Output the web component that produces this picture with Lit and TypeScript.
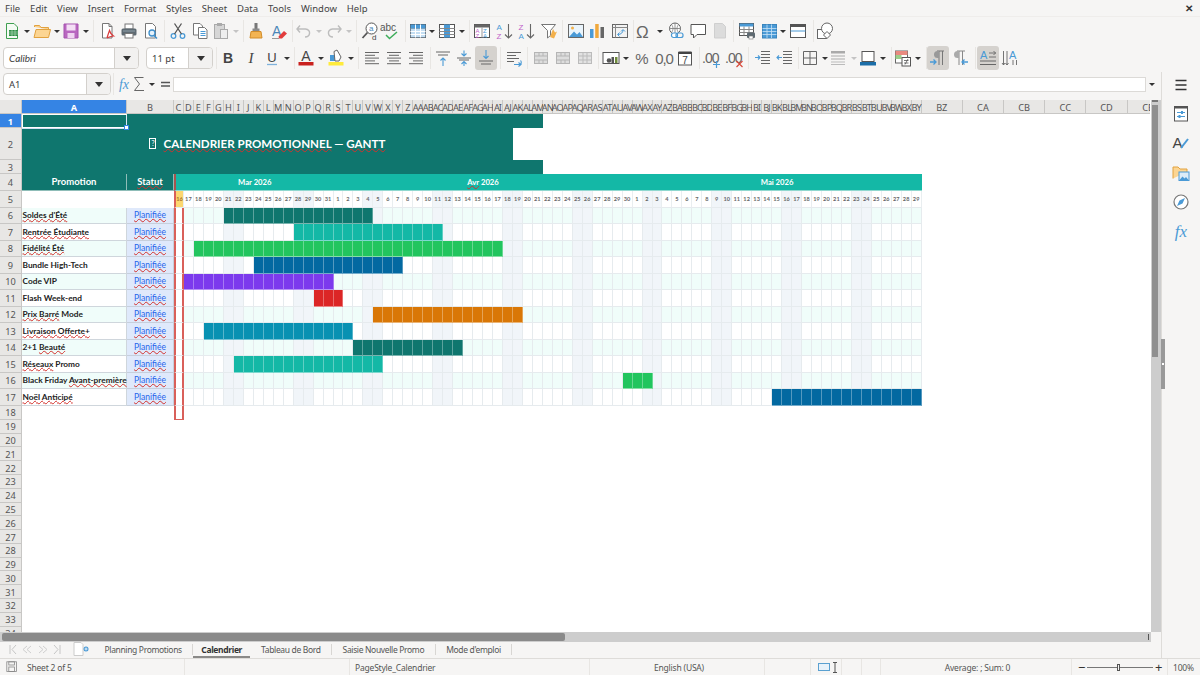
import { LitElement, html, css, svg } from "lit";
import { customElement } from "lit/decorators.js";

const G = "#6d6d6d";
const B = "#4a9ad6";
const LG = "#bdbdbd";
const line = (d: string, c = G, w = 1) => svg`<path d=${d} fill="none" stroke=${c} stroke-width=${w}/>`;
const tbl = (hl: string) => svg`<rect x="2.5" y="3.5" width="15" height="13" fill="#fff" stroke="#555"/>${line("M2.5 7.5h15M2.5 10.5h15M2.5 13.5h15M7.5 3.5v13M12.5 3.5v13", "#777")}${hl === "r" ? svg`<rect x="2.5" y="3.5" width="15" height="4" fill="#4a9ad6"/><rect x="2.5" y="7.5" width="15" height="9" fill="#a9d0ee" opacity=".7"/>${line("M2.5 10.5h15M2.5 13.5h15M7.5 3.5v13M12.5 3.5v13", "#fff")}` : svg`<rect x="7" y="3.5" width="6" height="13" fill="#4a9ad6"/>${line("M2.5 7.5h15M2.5 10.5h15M2.5 13.5h15", "#888")}`}`;
const lines3 = (kind: string) => {
  const rows = [[3, 17], [3, 13], [3, 17], [3, 13], [3, 17]];
  return rows.map((r, i) => {
    const w = r[1] - r[0];
    const x = kind === "l" ? 3 : kind === "r" ? 17 - w : 10 - w / 2;
    return line(`M${x} ${4.5 + i * 2.8}h${w}`, "#666");
  });
};
const merge = (c: string) => svg`<rect x="3.5" y="4.5" width="13" height="11" fill="#ddd" stroke=${c}/>${line("M3.5 8h13M3.5 12h13M8 4.5v3.5M12 4.5v3.5M8 12v3.5M12 12v3.5", c)}`;

const ICONS: Record<string, unknown> = {
  new: svg`<path d="M4.5 2.5h7.5l3.5 3.5v11.5h-11z" fill="#f4fbf4" stroke="#3f9f50"/><rect x="7" y="9" width="9" height="6" fill="#2f8d46"/>${line("M7 11h9M7 13h9M10 9v6M13 9v6", "#bfe3c6", .6)}`,
  open: svg`<path d="M2.5 6V4.5h5l1.5 2h7.5v2" fill="#f9d08c" stroke="#e2a23f"/><path d="M2 16.5 4 8.5h14.5l-2 8z" fill="#fcd592" stroke="#e2a23f"/>`,
  save: svg`<path d="M3 3h14v14H3z" fill="#b967c0" stroke="#a552ae"/><rect x="5.5" y="3.5" width="9" height="6" fill="#f4dff5"/><rect x="6.5" y="12" width="7" height="5" fill="#f0d4f1"/>`,
  pdf: svg`<path d="M5.5 2.5h6.5l3 3v11.5h-9.5z" fill="#fff" stroke="#777"/>${line("M12 2.5v3h3", "#777")}${line("M10 17c1-3.5 2-6 2.5-7.5.6 2.3 2 4.3 4 5.5-2.3.2-4.5.8-6.5 2", "#d83b3b", 1.2)}`,
  print: svg`<rect x="6" y="3" width="8" height="5" fill="#fff" stroke="#777"/><rect x="2.5" y="7.5" width="15" height="7" rx="1.5" fill="#5e6a72"/><rect x="6" y="12.5" width="8" height="4.5" fill="#fff" stroke="#777"/>${line("M4 10h12", "#8fa0aa")}`,
  preview: svg`<path d="M4.5 2.5h7l3 3v11.5h-10z" fill="#fff" stroke="#777"/><circle cx="11" cy="12" r="3" fill="#e6f2fb" stroke="#3f8fcb" stroke-width="1.3"/>${line("M13 14.5l3 3", "#3f8fcb", 1.5)}`,
  cut: svg`<circle cx="5.5" cy="15" r="2.3" fill="none" stroke=${B} stroke-width="1.3"/><circle cx="14.5" cy="15" r="2.3" fill="none" stroke=${B} stroke-width="1.3"/>${line("M6.5 13 13.5 2.5M13.5 13 6.5 2.5", "#555", 1.3)}`,
  copy: svg`<path d="M3.5 2.5h6.5l2.5 2.5v9h-9z" fill="#fff" stroke="#777"/><path d="M8.5 6.5h6l2.5 2.5v8.5h-8.5z" fill="#fff" stroke="#777"/>${line("M10.5 10.5h5M10.5 12.5h5M10.5 14.5h5", B)}`,
  paste: svg`<rect x="3.5" y="3.5" width="10" height="14" fill="#d6d6d6" stroke="#aaa"/><rect x="6" y="2" width="5" height="3" fill="#aaa"/><rect x="9.5" y="8.5" width="7" height="9" fill="#eee" stroke="#aaa"/>`,
  clone: svg`<rect x="8.5" y="2" width="3" height="6" fill="#777"/><rect x="6.5" y="7.5" width="7" height="2.5" fill="#8a8a8a"/><path d="M5 10.5h10l1 6.5H4z" fill="#f3b453" stroke="#d28d2a"/>`,
  clear: svg`<text x="3" y="14.5" font-family="Liberation Sans" font-size="14" fill="#4a86b8">A</text><path d="M9.5 15.5 15 10l3 2.5-5 5H10z" fill="#e23d3d"/>${line("M3 17.5h7", "#999")}`,
  undo: svg`${line("M6 11.5 3 8l3-3.5M3.5 8h8c6 .5 5 8 -.5 8", LG, 1.4)}`,
  redo: svg`${line("M14 11.5 17 8l-3-3.5M16.5 8h-8c-6 .5-5 8 .5 8", LG, 1.4)}`,
  find: svg`<circle cx="11.5" cy="7.5" r="5.5" fill="#fff" stroke="#555"/>${line("M7.5 11.5 2.5 17", "#555", 1.8)}<text x="9" y="10" font-family="Liberation Sans" font-size="8" fill="#4a86b8">a</text><text x="12" y="19" font-family="Liberation Sans" font-size="8" fill="#444">d</text>`,
  spell: svg`<text x="0" y="10" font-family="Liberation Sans" font-size="10" fill="#555">abc</text>${line("M6 14l3.5 3.5L17 11", "#3fae5b", 1.5)}`,
  rows: tbl("r"),
  cols: tbl("c"),
  sort: svg`<rect x="2.5" y="3.5" width="15" height="13" fill="#fff" stroke="#555"/><rect x="2.5" y="3.5" width="15" height="3" fill="#666"/>${line("M10 6.5v10", "#999")}<text x="3.5" y="12" font-family="Liberation Sans" font-size="6" fill="#c05fc9">A</text><text x="3.5" y="16.5" font-family="Liberation Sans" font-size="6" fill="#c05fc9">Z</text><text x="11" y="12" font-family="Liberation Sans" font-size="6" fill=${B}>Z</text><text x="11" y="16.5" font-family="Liberation Sans" font-size="6" fill=${B}>A</text>`,
  asc: svg`<text x="1.5" y="9" font-family="Liberation Sans" font-size="8" fill=${B}>A</text><text x="1.5" y="17.5" font-family="Liberation Sans" font-size="8" fill="#c05fc9">Z</text>${line("M13.5 3v14M10 13.5l3.5 3.5 3.5-3.5", "#666", 1.1)}`,
  desc: svg`<text x="1.5" y="9" font-family="Liberation Sans" font-size="8" fill="#c05fc9">Z</text><text x="1.5" y="17.5" font-family="Liberation Sans" font-size="8" fill=${B}>A</text>${line("M13.5 3v14M10 13.5l3.5 3.5 3.5-3.5", "#666", 1.1)}`,
  filter: svg`<path d="M2.5 3.5h14l-5 6v5l-3 2.5v-7.5z" fill="#fff" stroke="#777"/><path d="M11 16l3-8 2 3.5 2-1-3 7z" fill="#f3b04a"/>`,
  image: svg`<rect x="2.5" y="3.5" width="15" height="13" fill="#eaf4fb" stroke="#666"/><circle cx="6.5" cy="7" r="1.5" fill="#f3b04a"/><path d="M3 16l5-5.5 3 3 2.5-2.5 3.5 5z" fill=${B}/>`,
  chart: svg`<rect x="3" y="8" width="3.5" height="9" fill=${B}/><rect x="8.2" y="3" width="3.5" height="14" fill="#f0a83c"/><rect x="13.5" y="6" width="3.5" height="11" fill="#666"/>`,
  pivot: svg`<rect x="2.5" y="3.5" width="15" height="13" fill="#f3f3f3" stroke="#666"/>${line("M2.5 6.5h15M5.5 3.5v13", "#888")}${line("M8 13.5c3 0 5-2 5-4.5M11 10.5l2-2 2 2M9.5 11.5l-2 2 2 2", B)}`,
  omega: svg`<text x="1" y="16.5" font-family="Liberation Sans" font-size="17" fill="#666">Ω</text>`,
  link: svg`<circle cx="9" cy="7.5" r="5.5" fill="#fff" stroke="#666"/>${line("M3.5 7.5h11M9 2v11M5.5 3.5c2 3 2 5 0 8M12.5 3.5c-2 3-2 5 0 8", "#777", .8)}<rect x="5.5" y="12" width="6" height="4.5" rx="2" fill="#fff" stroke=${B} stroke-width="1.2"/><rect x="10" y="12" width="7" height="4.5" rx="2" fill="none" stroke=${B} stroke-width="1.2"/>`,
  comment: svg`<path d="M3 3.5h14.5v10H9l-3.5 3.5v-3.5H3z" fill="#fff" stroke="#555"/>`,
  note: svg`<path d="M4.5 2.5h8l3 3v11.5h-11z" fill="#dcdcdc" stroke="#cfcfcf"/>`,
  tprint: svg`<rect x="2.5" y="2.5" width="14" height="12" fill="#fff" stroke="#555"/><rect x="2.5" y="2.5" width="14" height="3" fill=${B}/>${line("M2.5 8.5h14M2.5 11.5h14M7 5.5v9M12 5.5v9", "#888")}<rect x="10" y="11.5" width="8" height="5.5" rx="1" fill="#5e6a72"/><rect x="12" y="15" width="4" height="3" fill="#fff" stroke="#777" stroke-width=".6"/>`,
  tblue: svg`<rect x="3.5" y="3.5" width="14" height="13.5" fill="#4a9ad6" stroke="#3a85bd"/>${line("M3.5 7.5h14M3.5 10.5h14M3.5 13.5h14M8 3.5v13.5M12.5 3.5v13.5", "#c8e2f5", .8)}`,
  split: svg`<rect x="2.5" y="3.5" width="15" height="13" fill="#fff" stroke="#555"/><rect x="2.5" y="3.5" width="15" height="2.5" fill="#555"/>${line("M2.5 10h15", B)}`,
  shapes: svg`<rect x="2.5" y="8.5" width="9" height="9" fill="#fff" stroke="#666"/><circle cx="12" cy="7.5" r="5.5" fill="#fff" stroke="#666"/><path d="M12 10.5l3.5 3.5-3.5 3.5-3.5-3.5z" fill="#fff" stroke="#666"/>`,
  bold: svg`<text x="10" y="15" text-anchor="middle" font-family="Liberation Sans" font-weight="700" font-size="14" fill="#444">B</text>`,
  italic: svg`<text x="10" y="15" text-anchor="middle" font-family="Liberation Serif" font-style="italic" font-size="15" fill="#444">I</text>`,
  under: svg`<text x="10" y="13.5" text-anchor="middle" font-family="Liberation Sans" font-size="13" fill="#444">U</text>${line("M5 16.5h10", "#7fb2dc", 1.3)}`,
  color: svg`<text x="10" y="13" text-anchor="middle" font-family="Liberation Sans" font-size="14" fill="#444">A</text><rect x="2.5" y="14" width="15" height="3.5" fill="#c9211e"/>`,
  bg: svg`<path d="M4 7h5v6H4z" fill=${B}/><path d="M8 3.5 11 2l4 7-2 4H9z" fill="#fff" stroke="#666"/><rect x="2.5" y="14" width="15" height="3.5" fill="#ffeb3b"/>`,
  left: svg`${lines3("l")}`,
  center: svg`${lines3("c")}`,
  right: svg`${lines3("r")}`,
  top: svg`${line("M3 4h14M5 7h10", "#666")}${line("M10 18v-8M7.5 12.5 10 10l2.5 2.5", B, 1.1)}`,
  vmid: svg`${line("M3 10h14M5 12h10", "#666")}${line("M10 2.5v5.5M7.5 5.5 10 8l2.5-2.5M10 18v-4M7.5 16 10 13.5l2.5 2.5", B, 1.1)}`,
  bottom: svg`${line("M3 13h14M5 16h10", "#666")}${line("M10 2v8.5M7.5 8 10 10.5 12.5 8", B, 1.1)}`,
  wrap: svg`${line("M3 4.5h14M3 7.5h9M3 10.5h12M3 13.5h7", "#666")}${line("M10 16.5h6.5c1-.5 1-3.5 0-4M14.5 14.5l2.5 2-2.5 2", B, 1.1)}`,
  m1: merge("#b5b5b5"),
  m2: merge("#b5b5b5"),
  m3: svg`<rect x="3.5" y="4.5" width="13" height="11" fill="#e2e2e2" stroke="#bbb"/>${line("M3.5 8h13M3.5 12h13M8 4.5v11M12 4.5v11", "#bbb")}`,
  cur: svg`<rect x="2" y="4.5" width="16" height="11" fill="#fff" stroke="#555"/><circle cx="8" cy="12.5" r="2.3" fill="#555"/><rect x="10.5" y="9" width="2.5" height="6" fill="#555"/><rect x="14" y="9" width="2.5" height="6" fill="#6e8a3a"/>`,
  pct: svg`<text x="10" y="15.5" text-anchor="middle" font-family="Liberation Sans" font-size="15" fill="#666">%</text>`,
  num: svg`<text x="10" y="15.5" text-anchor="middle" font-family="Liberation Sans" font-size="15" letter-spacing="-1.2" fill="#666">0,0</text>`,
  date: svg`<rect x="3.5" y="4.5" width="13" height="12.5" fill="#fff" stroke="#555"/><rect x="3.5" y="3.5" width="13" height="2.5" fill="#444"/><text x="10" y="15.5" text-anchor="middle" font-family="Liberation Sans" font-size="10" fill="#444">7</text>`,
  addd: svg`<text x="0" y="14.5" font-family="Liberation Sans" font-size="14" letter-spacing="-1" fill="#666">.00</text>${line("M11 16.5h7M14.5 13v7", B, 1.2)}`,
  deld: svg`<text x="0" y="14.5" font-family="Liberation Sans" font-size="14" letter-spacing="-1" fill="#666">.00</text>${line("M11.5 13l6 6M17.5 13l-6 6", "#d84a3a", 1.2)}`,
  indent: svg`${line("M8 3.5h9M8 6.5h9M8 9.5h9M8 12.5h9M8 15.5h9", "#666")}${line("M2 9.5h5M5 7.5l2 2-2 2", B, 1.1)}`,
  outdent: svg`${line("M8 3.5h9M8 6.5h9M8 9.5h9M8 12.5h9M8 15.5h9", "#666")}${line("M7 9.5H2M4 7.5l-2 2 2 2", B, 1.1)}`,
  border: svg`${line("M3.5 3.5h13v13h-13zM10 3.5v13M3.5 10h13", "#666")}`,
  lstyle: svg`<rect x="3" y="3" width="14" height="2.5" fill="#aaa"/>${line("M3 8h14M3 11h14", "#aaa")}${line("M3 14h14M3 16.5h14", "#bbb", 1)}`,
  bcolor: svg`<rect x="4" y="3.5" width="12" height="10" fill="#fff" stroke="#555"/><rect x="2" y="14" width="16" height="3.5" fill="#1c6ea8"/>`,
  cond: svg`<rect x="2.5" y="3" width="12" height="12" fill="#fff" stroke="#666"/><rect x="2.5" y="3" width="12" height="4" fill="#e88a80"/><rect x="2.5" y="7" width="6" height="4" fill="#9ccf8a"/><rect x="9" y="9.5" width="8.5" height="8.5" fill="#fff" stroke="#555"/>${line("M11 12.5h4.5M11 15h4.5M15 11l-3 5.5", "#555", .8)}`,
  ltr: svg`${line("M11 3v14M14.5 3v14M9 3h7", "#777")}<path d="M11 3H9.5a3.5 3.5 0 0 0 0 7H11z" fill="#999"/>${line("M2 14h6M5.5 11.5 8 14l-2.5 2.5", B, 1.3)}`,
  rtl: svg`${line("M9 3v14M12.5 3v14M7 3h8", "#888")}<path d="M9 3H7.5a3.5 3.5 0 0 0 0 7H9z" fill="#aaa"/>${line("M12 14h6M14.5 11.5 12 14l2.5 2.5", B, 1.3)}`,
  horiz: svg`<text x="2" y="10.5" font-family="Liberation Sans" font-size="11" fill=${B}>A</text>${line("M2 13h16M2 16.5h16", "#666")}${line("M11 5h7M11 9h7M15.5 3l2 2-2 2", "#666", .9)}`,
  vert: svg`<text x="9" y="10.5" font-family="Liberation Sans" font-size="11" fill=${B}>A</text>${line("M3.5 3v14M7 3v14M2 15l1.5 2 1.5-2M5.5 15 7 17l1.5-2M13 12v5M16.5 12v5", "#666", .9)}`,
  fx: svg`<text x="10" y="14.5" text-anchor="middle" font-family="Liberation Serif" font-style="italic" font-size="14" fill=${B}>fx</text>`,
  sum: svg`<path d="M5.5 3.5h9M5.5 3.5 10.5 10l-5 6.5h9.500" fill="none" stroke="#666" stroke-width="1"/>`,
  eq: svg`${line("M6 8.5h9M6 12h9", "#555", 1.4)}`,
  menu: svg`${line("M4.5 5.5h11M4.5 10h11M4.5 14.5h11", "#333", 1.4)}`,
  sprops: svg`<rect x="3.5" y="2.5" width="13" height="14.5" fill="#fff" stroke="#555"/><rect x="3.5" y="2.5" width="13" height="2" fill="#555"/>${line("M6 8.5h8M6 12.5h8", B, 1.2)}<rect x="10" y="7" width="2" height="3" fill=${B}/><rect x="7.5" y="11" width="2" height="3" fill=${B}/>`,
  sstyle: svg`<text x="1.5" y="15" font-family="Liberation Sans" font-size="15" fill="#444">A</text>${line("M10 15 17 6", B, 2)}`,
  sgal: svg`<path d="M2 15.5V4h5l2 2h7v3" fill="#fcd592" stroke="#e2a23f"/><rect x="8" y="9" width="10" height="8.5" fill="#dcecf8" stroke=${B}/><path d="M8.5 17l3-3.5 2 2 1.5-1.5 2.5 3z" fill=${B}/>`,
  snav: svg`<circle cx="10" cy="10" r="7" fill="#fff" stroke="#777" stroke-width="1.2"/><path d="M14 6l-2.5 5.5L6 14l2.5-5.5z" fill=${B}/>`,
  sfx: svg`<text x="10" y="15.5" text-anchor="middle" font-family="Liberation Serif" font-style="italic" font-size="17" fill=${B}>fx</text>`,
  ssave: svg`<rect x="3.5" y="3.5" width="12" height="12" fill="none" stroke="#888"/><rect x="6" y="3.5" width="7" height="4" fill="none" stroke="#888"/><rect x="6" y="10" width="7" height="5.5" fill="none" stroke="#888"/>`,
};

type Item = [number, string, string?];
const SEP = "sep", DD = "dd";
const TB1: Item[] = [[12,"new"],[27,DD],[42,"open"],[57,DD],[71,"save"],[86,DD],[93,SEP],[107,"pdf"],[129,"print"],[151,"preview"],[164,SEP],[178,"cut"],[200,"copy"],[221,"paste"],[236,"ddoff"],[243,SEP],[256,"clone"],[279,"clear"],[292,SEP],[304,"undo"],[319,"ddoff"],[334,"redo"],[349,"ddoff"],[356,SEP],[370,"find"],[390,"spell"],[405,SEP],[418,"rows"],[432,DD],[447,"cols"],[462,DD],[469,SEP],[482,"sort"],[505,"asc"],[527,"desc"],[549,"filter"],[562,SEP],[576,"image"],[597,"chart"],[620,"pivot"],[633,SEP],[645,"omega"],[660,DD],[676,"link"],[698,"comment"],[720,"note"],[733,SEP],[747,"tprint"],[769,"tblue"],[783,DD],[798,"split"],[813,SEP],[825,"shapes"]];
const TB2: Item[] = [[216,SEP],[228,"bold"],[251,"italic"],[272,"under"],[287,DD],[294,SEP],[306,"color"],[321,DD],[336,"bg"],[351,DD],[358,SEP],[372,"left"],[394,"center"],[416,"right"],[430,SEP],[443,"top"],[464,"vmid"],[486,"bottom","on"],[500,SEP],[514,"wrap"],[527,SEP],[541,"m1"],[563,"m2"],[585,"m3"],[598,SEP],[611,"cur"],[626,DD],[642,"pct"],[664,"num"],[685,"date"],[699,SEP],[712,"addd"],[735,"deld"],[748,SEP],[763,"indent"],[785,"outdent"],[798,SEP],[810,"border"],[825,DD],[838,"lstyle"],[854,"ddoff"],[868,"bcolor"],[883,DD],[891,SEP],[903,"cond"],[918,DD],[926,SEP],[938,"ltr","on"],[960,"rtl"],[975,SEP],[988,"horiz","on"],[1010,"vert"]];

const ico = (n: string) => html`<svg class="i" viewBox="0 0 20 20">${ICONS[n]}</svg>`;
function items(list: Item[], start: number) {
  let cur = start;
  return list.map(([x, n, cls]) => {
    const w = n === SEP ? 1 : n === DD || n === "ddoff" ? 8 : 22;
    const ml = x - w / 2 - cur;
    cur = x + w / 2;
    const st = `margin-left:${ml}px`;
    if (n === SEP) return html`<span class="sep" style=${st}></span>`;
    if (n === DD || n === "ddoff") return html`<span class="dd ${n === "ddoff" ? "off" : ""}" style=${st}></span>`;
    return html`<span class="btn ${cls ?? ""}" style=${st}>${ico(n)}</span>`;
  });
}

const colName = (n: number) => {
  let s = "";
  while (n > 0) { const r = (n - 1) % 26; s = String.fromCharCode(65 + r) + s; n = Math.floor((n - 1) / 26); }
  return s;
};
const DARK = "#0f766e", LIGHT = "#14b8a6", GREEN = "#22c55e", BLUE = "#0369a1", PURP = "#7c3aed", RED = "#dc2626", ORG = "#d97706", CYAN = "#0891b2";
type Row = [unknown, number, number, string];
const wz = (t: string) => html`<span class="w">${t}</span>`;
const ROWS: Row[] = [
  [wz("Soldes d'Été"), 5, 19, DARK],
  [wz("Rentrée Étudiante"), 12, 26, LIGHT],
  [wz("Fidélité Été"), 2, 32, GREEN],
  ["Bundle High-Tech", 8, 22, BLUE],
  ["Code VIP", 1, 15, PURP],
  ["Flash Week-end", 14, 16, RED],
  [html`${wz("Prix Barré")} Mode`, 20, 34, ORG],
  [wz("Livraison Offerte+"), 3, 17, CYAN],
  [html`2+1 ${wz("Beauté")}`, 18, 28, DARK],
  [html`${wz("Réseaux")} Promo`, 6, 20, LIGHT],
  [html`Black Friday ${wz("Avant-première")}`, 45, 47, GREEN],
  [wz("Noël Anticipé"), 60, 74, BLUE],
];
const isWe = (i: number) => ((i - 5) % 7 + 7) % 7 < 2;
const dayNum = (i: number) => (i < 16 ? 16 + i : i < 46 ? i - 15 : i - 45);
const area = (r: number, c: number, r2 = r + 1, c2 = c + 1) => `grid-area:${r}/${c}/${r2}/${c2}`;

function gridCells() {
  const out: unknown[] = [];
  out.push(html`<div class="h corner" style=${area(1, 1)}></div>`);
  out.push(html`<div class="h sel" style=${area(1, 2)}>A</div>`);
  out.push(html`<div class="h" style=${area(1, 3)}>B</div>`);
  for (let i = 0; i < 81; i++) out.push(html`<div class="h ${i >= 24 && i < 75 ? "tight" : ""}" style=${area(1, 4 + i)}>${colName(3 + i)}</div>`);
  for (let r = 1; r <= 34; r++) out.push(html`<div class="h rh ${r === 1 ? "sel" : ""}" style=${area(r + 1, 1)}>${r}</div>`);
  out.push(html`<div class="title" style=${area(2, 2, 5, 38)}><span class="tofu">?</span><span>${wz("CALENDRIER PROMOTIONNEL")} — ${wz("GANTT")}</span></div>`);
  out.push(html`<div class="dk" style=${area(2, 38, 3, 41)}></div>`);
  out.push(html`<div class="dk" style=${area(4, 38, 5, 41)}></div>`);
  out.push(html`<div class="cursor" style=${area(2, 2)}><span class="handle"></span></div>`);
  out.push(html`<div class="hd" style=${area(5, 2)}>Promotion</div>`);
  out.push(html`<div class="hd" style=${area(5, 3)}>${wz("Statut")}</div>`);
  out.push(html`<div class="mo first" style=${area(5, 4, 6, 20)}>Mar 2026</div>`);
  out.push(html`<div class="mo" style=${area(5, 20, 6, 50)}><span>${wz("Avr")} 2026</span></div>`);
  out.push(html`<div class="mo" style=${area(5, 50, 6, 79)}>Mai 2026</div>`);
  for (let i = 0; i < 75; i++) {
    out.push(html`<div class="dn ${i === 0 ? "today" : isWe(i) ? "we" : ""}" style=${area(6, 4 + i)}>${dayNum(i)}</div>`);
  }
  ROWS.forEach(([label, a, b, col], k) => {
    const r = 7 + k;
    const alt = k % 2 === 0;
    out.push(html`<div class="nm ${alt ? "alt" : ""}" style=${area(r, 2)}><span>${label}</span></div>`);
    out.push(html`<div class="st" style=${area(r, 3)}>${wz("Planifiée")}</div>`);
    for (let i = 0; i < 75; i++) {
      if (i >= a && i <= b) {
        out.push(html`<div class="d bar" style="${area(r, 4 + i)};background:${col}"></div>`);
      } else {
        const cls = i === 0 ? "tc" : isWe(i) ? "we" : alt ? "alt" : "";
        out.push(html`<div class="d ${cls}" style=${area(r, 4 + i)}></div>`);
      }
    }
  });
  out.push(html`<div class="tc end" style=${area(19, 4)}></div>`);
  return out;
}

@customElement("app-root")
export class AppRoot extends LitElement {
  static styles = css`
    :host { display: block; width: 1200px; height: 675px; overflow: hidden; background: #f6f5f4; font-family: "Noto Sans", sans-serif; color: #3d3d3d; }
    .app { display: flex; flex-direction: column; width: 1200px; height: 675px; }
    .menubar { display: flex; align-items: center; justify-content: space-between; height: 17px; padding: 0 7px 0 5px; font-size: 9.5px; border-bottom: 1px solid #efedeb; flex: none; box-sizing: border-box; color: #444; }
    .menus { display: flex; gap: 9.9px; }
    .close { font-size: 10px; font-weight: 700; color: #333; }
    .tb { display: flex; align-items: center; flex: none; }
    .tb1 { height: 27px; }
    .tb2 { height: 28px; }
    .btn { display: flex; align-items: center; justify-content: center; width: 22px; height: 24px; flex: none; border-radius: 3px; }
    .btn.on { background: #d5d2ce; }
    .i { width: 20px; height: 20px; display: block; flex: none; }
    .sep { width: 1px; height: 22px; background: #e8e6e3; flex: none; }
    .dd { width: 8px; height: 0; flex: none; position: relative; }
    .dd::after { content: ""; position: absolute; left: 1px; top: -1px; border: 3px solid transparent; border-top: 3.5px solid #333; border-bottom: 0; }
    .dd.off::after { border-top-color: #c4c4c4; }
    .combo { display: flex; height: 22px; background: #fff; border: 1px solid #d3d0cc; border-radius: 4px; flex: none; font-size: 9.5px; box-sizing: border-box; overflow: hidden; }
    .combo .v { flex: 1; display: flex; align-items: center; padding-left: 5px; }
    .combo .a { width: 23px; background: #f2f1f0; border-left: 1px solid #d3d0cc; display: flex; align-items: center; justify-content: center; }
    .combo .a::after { content: ""; border: 4px solid transparent; border-top: 5px solid #333; border-bottom: 0; }
    .font { width: 136px; margin-left: 3px; font-style: italic; font-family: "Lato", sans-serif; font-size: 10px; }
    .size { width: 67px; margin-left: 7px; }
    .below { flex: 1; display: flex; min-height: 0; }
    .main { width: 1161px; flex: none; display: flex; flex-direction: column; }
    .side { flex: 1; border-left: 1px solid #dedcd9; display: flex; flex-direction: column; align-items: center; padding-top: 3px; gap: 9.2px; position: relative; }
    .grip { position: absolute; left: -1px; top: 267px; width: 4px; height: 50px; background: #999; }
    .grip::after { content: ""; position: absolute; top: 24px; left: 1px; width: 2px; height: 2px; background: #fff; }
    .fbar { display: flex; align-items: center; height: 28px; flex: none; box-sizing: border-box; padding-bottom: 4px; }
    .name { width: 108px; margin-left: 3px; }
    .input { width: 973px; height: 15px; background: #fff; border: 1px solid #dcdad7; box-sizing: border-box; flex: none; margin-left: -3px; }
    .fdd { margin-left: 2px; }
    .view { flex: 1; display: flex; min-height: 0; background: #fff; }
    .sheet { width: 1150px; height: 532px; overflow: hidden; flex: none; display: grid; font-family: "Lato", sans-serif;
      grid-template-columns: 22px 105px 47px repeat(75, 9.973px) repeat(6, 41.2px);
      grid-template-rows: 14px 14px 32px 14px 17px 16.7px repeat(12, 16.5px) 14.2px repeat(16, 13.79px); }
    .h { background: #e8e7e5; border-right: 1px solid #c8c7c5; border-bottom: 1px solid #c8c7c5; box-sizing: border-box; display: flex; align-items: center; justify-content: center; white-space: nowrap; font: 9.2px "Noto Sans", sans-serif; color: #555; padding-top: 1px; }
    .h.tight { letter-spacing: -.9px; }
    .h.sel { background: #3584e4; color: #fff; font-weight: 700; }
    .title { background: #0f766e; color: #fff; font: 700 11.6px "Lato", sans-serif; display: flex; align-items: center; justify-content: center; gap: 7px; white-space: nowrap; padding-bottom: 2px; box-sizing: border-box; }
    .tofu { width: 5px; height: 9px; border: 1px solid #fff; font-size: 7px; line-height: 9px; text-align: center; font-weight: 400; }
    .dk { background: #0f766e; }
    .w { text-decoration: underline wavy #d3312c; text-decoration-thickness: 1px; text-underline-offset: 0; text-decoration-skip-ink: none; }
    .cursor { border: 1px solid #fff; border-right-color: #dbe8f7; box-sizing: border-box; position: relative; box-shadow: 0 1px 0 #cfe0f5; z-index: 2; }
    .handle { position: absolute; right: -3px; bottom: -3px; width: 3px; height: 3px; background: #fff; border: 1px solid #3584e4; }
    .hd { background: #0f766e; color: #fff; font-weight: 700; font-size: 9.5px; display: flex; align-items: center; justify-content: center; border-right: 1px solid #8fbdb8; border-bottom: 1px solid #8fbdb8; box-sizing: border-box; padding-bottom: 1px; }
    .mo { background: #14b8a6; color: #fff; font-weight: 700; font-size: 7.7px; display: flex; align-items: center; justify-content: center; border-bottom: 1px solid #8fd8cf; box-sizing: border-box; }
    .mo.first { border-left: 2px solid #a5544f; }
    .dn { font-size: 5.6px; color: #666; display: flex; align-items: center; justify-content: center; border-right: 1px solid #e9eef0; border-bottom: 1px solid #e6ebee; box-sizing: border-box; background: #fff; font-weight: 700; letter-spacing: .1px; }
    .dn.we { background: #f1f5f9; }
    .dn.today { background: #fcd770; color: #a5702a; border-left: 2px solid #d9605a; }
    .nm { font-size: 8.3px; font-weight: 700; color: #222; white-space: nowrap; display: flex; align-items: center; padding-left: .5px; box-sizing: border-box; background: #fff; border-right: 1px solid #cfd6dc; border-bottom: 1px solid #cfd6dc; }
    .nm.alt { background: #f0fdfa; }
    .st { background: #dfe9fb; color: #2563eb; font-size: 8.5px; display: flex; align-items: center; justify-content: center; border-right: 1px solid #c6cfdc; border-bottom: 1px solid #c6cfdc; box-sizing: border-box; }
    .d { border-right: 1px solid #e6ebee; border-bottom: 1px solid #e6ebee; box-sizing: border-box; background: #fff; }
    .d.alt { background: #f0fdfa; }
    .d.we { background: #f1f5f9; }
    .d.bar { border-right-color: rgba(255,255,255,.32); border-bottom-color: rgba(255,255,255,.45); }
    .tc, .d.tc { border-left: 2px solid #d9605a; border-right: 2px solid #d9605a; background: #fff; box-sizing: border-box; }
    .tc.end { border-bottom: 1px solid #d9605a; }
    .vs { width: 10px; background: #cdcdcd; flex: none; position: relative; margin-left: 1px; }
    .vs::before { content: ""; position: absolute; left: 1px; top: 5px; width: 6px; height: 252px; background: #8f8f8f; }
    .vs::after { content: ""; position: absolute; left: 1px; top: 0; width: 6px; height: 2px; background: #777; }
    .hs { height: 10px; flex: none; width: 1151px; background: #cdcdcd; position: relative; }
    .hs::before { content: ""; position: absolute; left: 2px; top: 1px; width: 563px; height: 8px; background: #8a8a8a; border-radius: 2px; }
    .hs::after { content: ""; position: absolute; left: 1148px; top: 2px; width: 1px; height: 6px; background: #555; }
    .tabs { height: 16px; flex: none; display: flex; align-items: center; font-size: 8.5px; letter-spacing: -.35px; color: #555; box-sizing: border-box; padding-bottom: 2px; }
    .nav { display: flex; align-items: center; width: 66px; padding-left: 7px; box-sizing: border-box; flex: none; }
    .navbtn { width: 14px; height: 11px; flex: none; }
    .docp { flex: none; width: 20px; height: 14px; margin-left: 5px; }
    .tab { padding: 0 10.5px; border-right: 1px solid #d8d6d3; height: 11px; line-height: 11px; position: relative; white-space: nowrap; }
    .tab.first { margin-left: 3px; padding-right: 10px; }
    .tab.act { font-weight: 700; color: #333; border-right-color: transparent; padding: 0 7.5px 0 8.5px; }
    .tab.act::after { content: ""; position: absolute; left: 0; right: 0; bottom: -3px; height: 2px; background: #8b8a88; }
    .status { height: 17px; flex: none; border-top: 1px solid #dedcd9; box-sizing: border-box; display: flex; align-items: center; font-size: 8.5px; letter-spacing: -.2px; color: #555; }
    .s { display: flex; align-items: center; height: 100%; box-sizing: border-box; border-right: 1px solid #e8e6e3; flex: none; white-space: nowrap; }
    .s1 { width: 185px; padding-left: 2px; gap: 5px; }
    .s2 { width: 165px; }
    .s3 { width: 240px; padding-left: 5px; }
    .s4 { width: 175px; justify-content: center; padding-left: 4px; }
    .s5 { width: 46px; }
    .s6 { width: 31px; padding-left: 7px; gap: 3px; }
    .s7 { width: 20px; }
    .s8 { width: 19px; }
    .s9 { width: 191px; justify-content: center; padding-left: 3px; }
    .s10 { width: 96px; padding-left: 5px; }
    .s11 { border: 0; padding-left: 5px; }
    .sm { width: 12px; height: 8px; border: 1px solid #5aa0d0; background: #e8f2fa; box-sizing: border-box; flex: none; }
    .cur { width: 4px; height: 11px; flex: none; }
    .zm { font-size: 13px; line-height: 10px; color: #333; flex: none; width: 9px; text-align: center; }
    .trk { width: 66px; height: 1px; background: #777; position: relative; flex: none; margin: 0 1px; }
    .trk::after { content: ""; position: absolute; left: 30px; top: -3px; width: 3px; height: 7px; border: 1px solid #555; box-sizing: border-box; background: #f6f5f4; }
    .s1 .i { height: 16px; }
  `;

  render() {
    const menus = ["File", "Edit", "View", "Insert", "Format", "Styles", "Sheet", "Data", "Tools", "Window", "Help"];
    const tabs = ["Planning Promotions", "Calendrier", "Tableau de Bord", "Saisie Nouvelle Promo", "Mode d'emploi"];
    return html`<div class="app">
      <div class="menubar"><div class="menus">${menus.map((m) => html`<span>${m}</span>`)}</div><span class="close">✕</span></div>
      <div class="tb tb1">${items(TB1, 0)}</div>
      <div class="tb tb2">
        <div class="combo font"><span class="v">Calibri</span><span class="a"></span></div>
        <div class="combo size"><span class="v">11 pt</span><span class="a"></span></div>
        ${items(TB2, 213)}
      </div>
      <div class="below">
        <div class="main">
          <div class="fbar">
            <div class="combo name"><span class="v">A1</span><span class="a"></span></div>
            ${items([[113, SEP], [124, "fx"], [139, "sum"], [152, DD], [165, "eq"]] as Item[], 111)}
            <div class="input"></div>
            <span class="dd fdd"></span>
          </div>
          <div class="view">
            <div class="sheet">${gridCells()}</div>
            <div class="vs"></div>
          </div>
          <div class="hs"></div>
          <div class="tabs">
            <div class="nav">
              <svg class="navbtn" viewBox="0 0 14 11"><path d="M3 1v9M9 1 5 5.5l4 4.5" fill="none" stroke="#c6c6c6"/></svg>
              <svg class="navbtn" viewBox="0 0 14 11"><path d="M10 2 6 5.5 10 9M6 2 2 5.5 6 9" fill="none" stroke="#cfcfcf"/></svg>
              <svg class="navbtn" viewBox="0 0 14 11"><path d="M4 2l4 3.5L4 9M8 2l4 3.5L8 9" fill="none" stroke="#cfcfcf"/></svg>
              <svg class="navbtn" viewBox="0 0 14 11"><path d="M11 1v9M5 1l4 4.5L5 10" fill="none" stroke="#c6c6c6"/></svg>
            </div>
            <svg class="docp" viewBox="0 0 20 14"><path d="M3 .5h7l2 2v11H3z" fill="#fff" stroke="#ccc"/><circle cx="15" cy="7" r="2.5" fill="#4a9ad6"/><path d="M15 5.5v3M13.5 7h3" stroke="#fff" stroke-width=".8"/></svg>
            ${tabs.map((t, i) => html`<span class="tab ${i === 0 ? "first" : ""} ${i === 1 ? "act" : ""}">${t}</span>`)}
          </div>
        </div>
        <div class="side">
          <span class="grip"></span>
          ${["menu", "sprops", "sstyle", "sgal", "snav", "sfx"].map((n) => ico(n))}
        </div>
      </div>
      <div class="status">
        <div class="s s1">${ico("ssave")}<span>Sheet 2 of 5</span></div>
        <div class="s s2"></div>
        <div class="s s3">PageStyle_Calendrier</div>
        <div class="s s4">English (USA)</div>
        <div class="s s5"></div>
        <div class="s s6"><span class="sm"></span><svg class="cur" viewBox="0 0 4 11"><path d="M0 .5h4M0 10.5h4M2 .5v10" stroke="#555" fill="none"/></svg></div>
        <div class="s s7"></div>
        <div class="s s8"></div>
        <div class="s s9">Average: ; Sum: 0</div>
        <div class="s s10"><span class="zm">−</span><span class="trk"></span><span class="zm">+</span></div>
        <div class="s s11">100%</div>
      </div>
    </div>`;
  }
}
